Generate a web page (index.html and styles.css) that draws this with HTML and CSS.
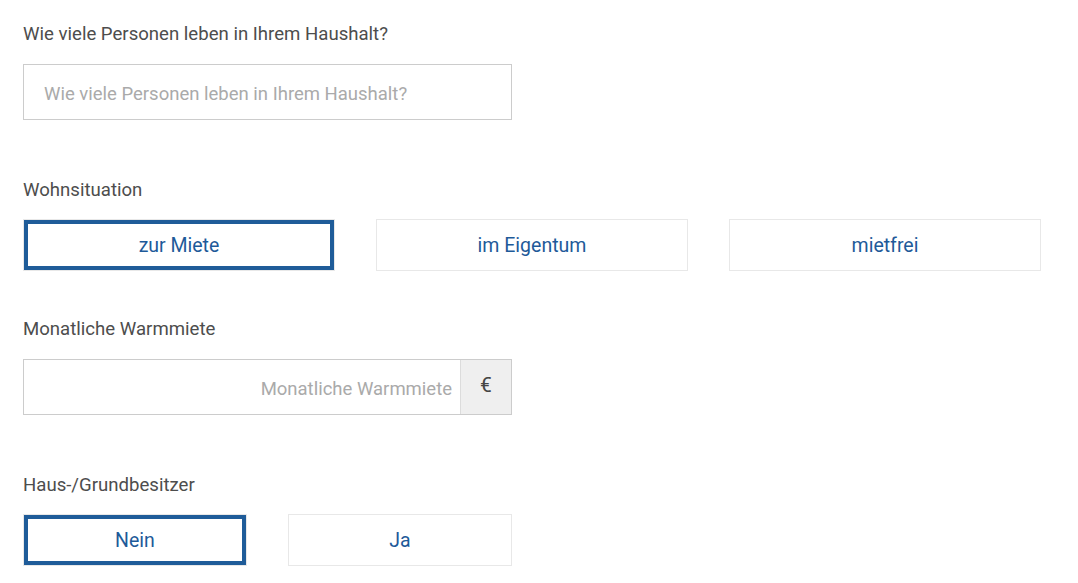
FILE: index.html
```html
<!DOCTYPE html>
<html lang="de">
<head>
<meta charset="utf-8">
<title>Haushalt</title>
<link rel="stylesheet" href="styles.css">
</head>
<body>
<form class="form">
  <div class="group group-input">
    <label class="label" for="personen">Wie viele Personen leben in Ihrem Haushalt?</label>
    <div class="field">
      <input class="input" id="personen" type="text" placeholder="Wie viele Personen leben in Ihrem Haushalt?">
    </div>
  </div>

  <div class="group group-choice">
    <div class="label">Wohnsituation</div>
    <div class="choices choices-3">
      <button type="button" class="choice selected">zur Miete</button>
      <button type="button" class="choice">im Eigentum</button>
      <button type="button" class="choice">mietfrei</button>
    </div>
  </div>

  <div class="group group-input">
    <label class="label" for="miete">Monatliche Warmmiete</label>
    <div class="field field-addon">
      <input class="input input-right" id="miete" type="text" placeholder="Monatliche Warmmiete">
      <span class="addon">€</span>
    </div>
  </div>

  <div class="group group-choice group-last">
    <div class="label">Haus-/Grundbesitzer</div>
    <div class="choices choices-2">
      <button type="button" class="choice selected">Nein</button>
      <button type="button" class="choice">Ja</button>
    </div>
  </div>
</form>
</body>
</html>
```

FILE: styles.css
```css
* { box-sizing: border-box; }

html, body {
  margin: 0;
  padding: 0;
  background: #ffffff;
}

body {
  font-family: Roboto, "Liberation Sans", Arial, sans-serif;
  color: #4a4a4a;
}

.form {
  padding: 22px 0 0 23px;
  width: 1041px;
}

.group-input { margin-bottom: 58px; }
.group-choice { margin-bottom: 46px; }
.group-last { margin-bottom: 0; }

.label {
  display: block;
  font-size: 18.6px;
  line-height: 24px;
  color: #4d4d4d;
  margin-bottom: 18px;
}

.group-choice .label { margin-bottom: 17px; }

.field {
  display: flex;
  width: 489px;
  height: 56px;
  border: 1px solid #cccccc;
  background: #fff;
}

.input {
  flex: 1;
  min-width: 0;
  border: 0;
  outline: none;
  padding: 4px 19px 0 20px;
  font-family: inherit;
  font-size: 18.5px;
  color: #333;
  background: transparent;
}

.input::placeholder { color: #aaaaaa; }

.input-right {
  text-align: right;
  padding-right: 8px;
}

.addon {
  width: 51px;
  display: flex;
  align-items: center;
  justify-content: center;
  background: #efefef;
  border-left: 1px solid #dcdcdc;
  font-size: 21px;
  color: #444444;
  padding-bottom: 4px;
}

.choices {
  display: grid;
  column-gap: 41px;
}

.choices-3 {
  grid-template-columns: repeat(3, 312px);
}

.choices-2 {
  grid-template-columns: repeat(2, 224px);
}

.choice {
  height: 52px;
  border: 1px solid #e8e8e8;
  background: #fff;
  font-family: inherit;
  font-size: 19.5px;
  color: #1e5a99;
  cursor: pointer;
  padding: 0;
}

.choice.selected {
  box-shadow: inset 0 0 0 4px #1f5c99;
}
```
